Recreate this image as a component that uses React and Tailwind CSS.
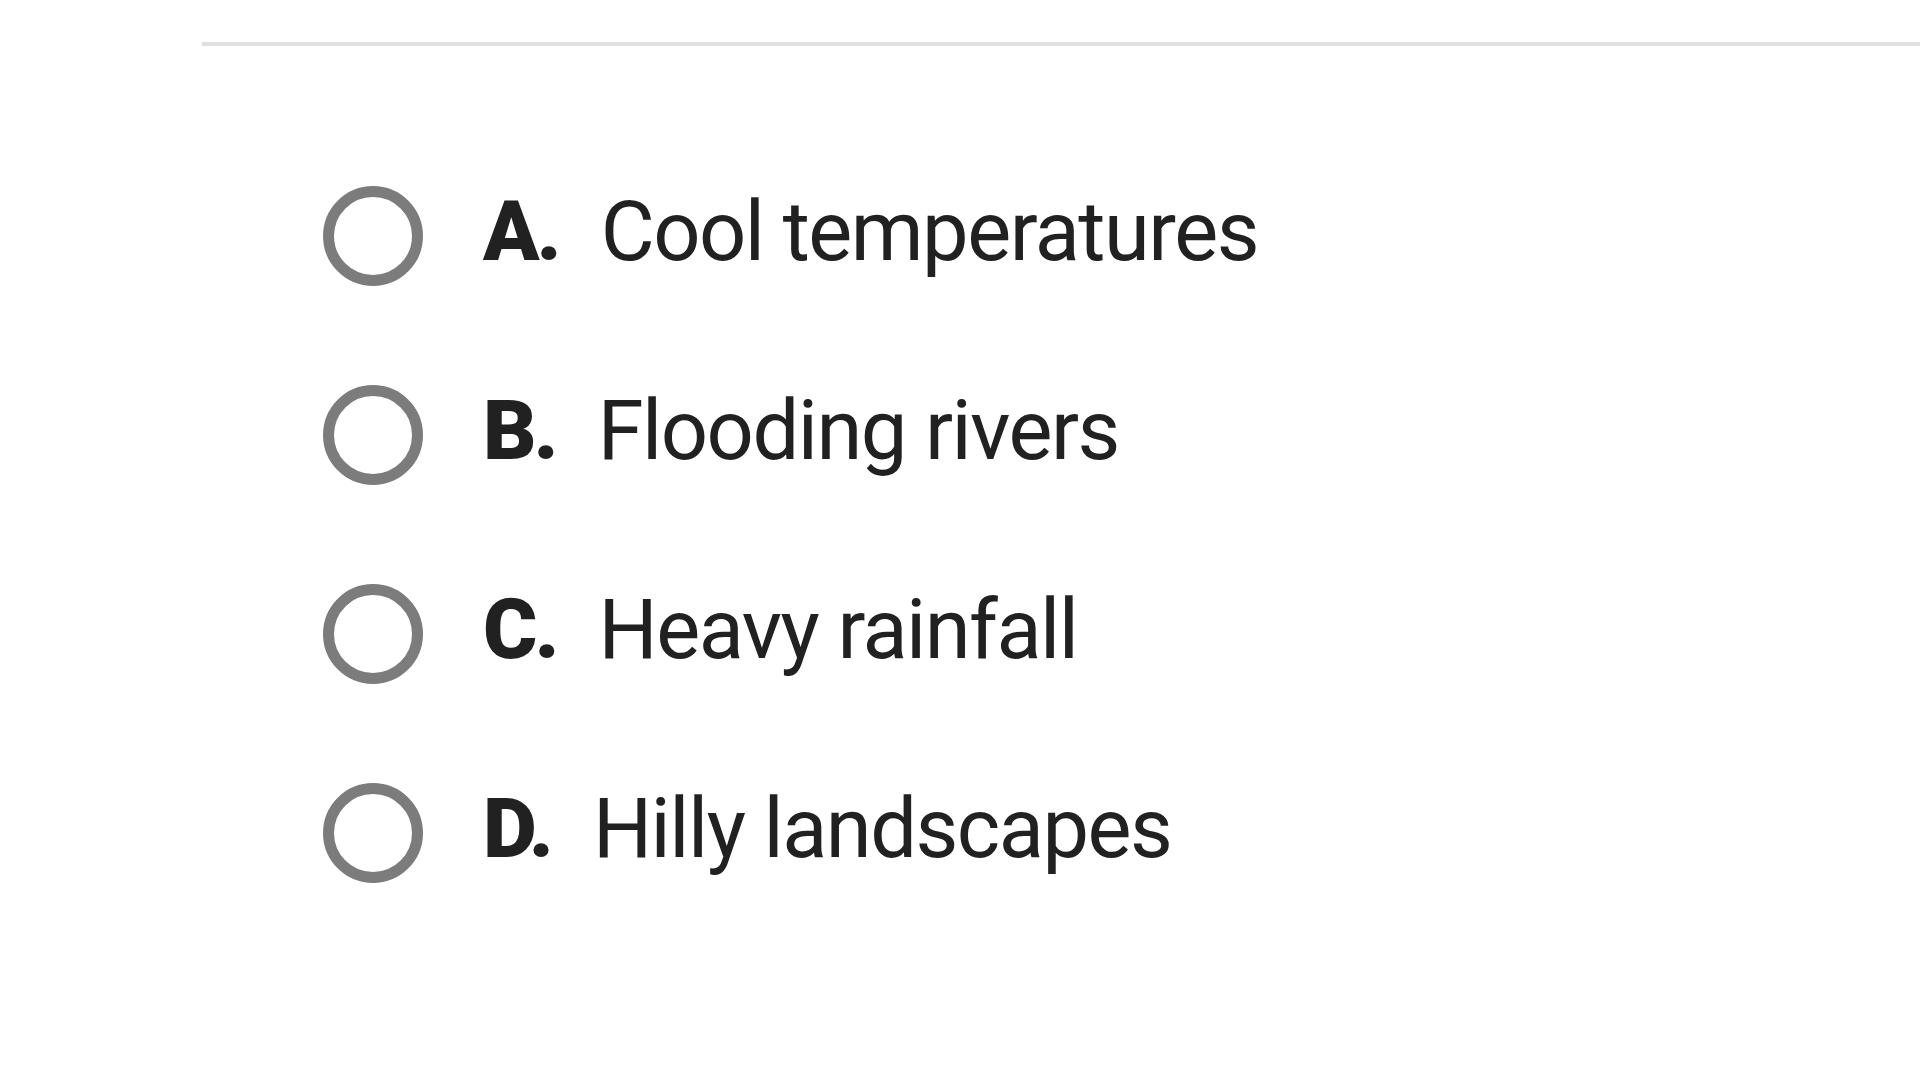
export default function App() {
  const options = [
    { l: "A.", t: "Cool temperatures" },
    { l: "B.", t: "Flooding rivers" },
    { l: "C.", t: "Heavy rainfall" },
    { l: "D.", t: "Hilly landscapes" },
  ];
  return (
    <div className="w-[1920px] h-[1080px] bg-white overflow-hidden" style={{ fontFamily: "Roboto, 'Noto Sans', sans-serif" }}>
      <div className="pl-[202px] pt-[42px]">
        <div className="h-[4px] bg-[#e0e0e0]" />
      </div>
      <div className="pl-[323px] pt-[90px] flex flex-col">
        {options.map((o) => (
          <div key={o.l} className="flex items-center h-[199px]">
            <div className="w-[100px] h-[100px] rounded-full border-[11px] border-[#7c7c7c] shrink-0" />
            <div className="ml-[60px] mb-[8px] flex items-baseline text-[83px] leading-[1.2] text-[#212121]">
              <span className="font-black tracking-[-3px]">{o.l}</span>
              <span className="ml-[42px] tracking-[-1.5px]">{o.t}</span>
            </div>
          </div>
        ))}
      </div>
    </div>
  );
}
